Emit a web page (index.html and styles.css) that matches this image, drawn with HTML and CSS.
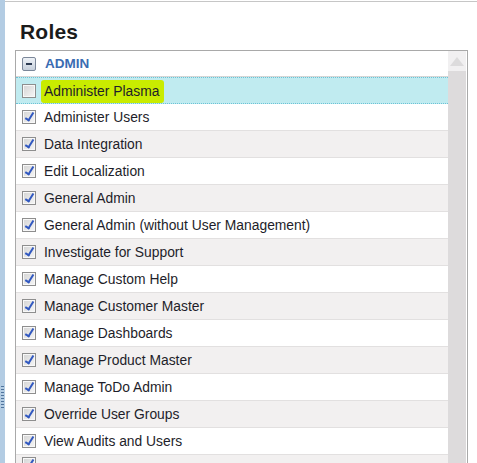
FILE: index.html
```html
<!DOCTYPE html>
<html>
<head>
<meta charset="utf-8">
<link rel="stylesheet" href="styles.css">
</head>
<body>
<div class="page">
  <div class="strip"><div class="grip"></div></div>
  <div class="main">
    <h1 class="title">Roles</h1>
    <div class="box">
      <div class="list">
        <div class="group">
          <span class="minus"><span class="bar"></span></span>
          <span class="group-name">ADMIN</span>
        </div>
        <div class="row selected"><span class="cb"></span><span class="label"><span class="hl">Administer Plasma</span></span></div>
        <div class="row"><span class="cb on"></span><span class="label">Administer Users</span></div>
        <div class="row alt"><span class="cb on"></span><span class="label">Data Integration</span></div>
        <div class="row"><span class="cb on"></span><span class="label">Edit Localization</span></div>
        <div class="row alt"><span class="cb on"></span><span class="label">General Admin</span></div>
        <div class="row"><span class="cb on"></span><span class="label">General Admin (without User Management)</span></div>
        <div class="row alt"><span class="cb on"></span><span class="label">Investigate for Support</span></div>
        <div class="row"><span class="cb on"></span><span class="label">Manage Custom Help</span></div>
        <div class="row alt"><span class="cb on"></span><span class="label">Manage Customer Master</span></div>
        <div class="row"><span class="cb on"></span><span class="label">Manage Dashboards</span></div>
        <div class="row alt"><span class="cb on"></span><span class="label">Manage Product Master</span></div>
        <div class="row"><span class="cb on"></span><span class="label">Manage ToDo Admin</span></div>
        <div class="row alt"><span class="cb on"></span><span class="label">Override User Groups</span></div>
        <div class="row"><span class="cb on"></span><span class="label">View Audits and Users</span></div>
        <div class="row alt last"><span class="cb on"></span></div>
      </div>
      <div class="scroll">
        <div class="up"><span class="tri"></span></div>
        <div class="track"></div>
      </div>
    </div>
  </div>
</div>
</body>
</html>
```
FILE: styles.css
```css
html, body {
  margin: 0;
  padding: 0;
  background: #fff;
  overflow: hidden;
}
.page {
  display: flex;
  height: 463px;
  font-family: "Liberation Sans", Arial, sans-serif;
}
.strip {
  width: 5px;
  flex: none;
  background: #b3cce3;
  position: relative;
}
.grip {
  position: absolute;
  left: 1px;
  top: 386px;
  width: 3px;
  height: 22px;
  background: repeating-linear-gradient(to bottom, #4f739c 0 1px, transparent 1px 3px);
}
.main {
  flex: 1;
  margin-top: 1px;
  border-top: 1px solid #c6c6c6;
  padding-left: 10px;
  overflow: hidden;
}
.title {
  margin: 0;
  padding: 17px 0 0 5px;
  height: 31px;
  font-size: 21px;
  font-weight: bold;
  color: #1b1b1b;
  letter-spacing: 0.2px;
  line-height: 26px;
}
.box {
  width: 451px;
  height: 420px;
  border: 1px solid #a9a9a9;
  display: flex;
}
.list {
  width: 432px;
  flex: none;
}
.group {
  height: 25px;
  border-bottom: 1px solid #d6d6d6;
  display: flex;
  align-items: center;
  padding-left: 6px;
}
.minus {
  width: 12px;
  height: 12px;
  border: 1px solid #7b8799;
  border-radius: 2px;
  background: linear-gradient(#eef2f7, #c6cfdb);
  display: flex;
  align-items: center;
  justify-content: center;
  margin-right: 9px;
}
.bar {
  width: 6px;
  height: 2px;
  background: #2c3a52;
}
.group-name {
  font-size: 13.5px;
  font-weight: bold;
  color: #3a6cb2;
}
.row {
  height: 26px;
  border-bottom: 1px solid #e2e0e0;
  display: flex;
  align-items: center;
  padding-left: 6px;
  background: #fff;
}
.row.alt {
  background: #f2f0f0;
}
.row.selected {
  background: #c0ebf0;
  border-top: 1px dotted #6cc3d6;
  border-bottom: 1px dotted #6cc3d6;
  height: 25px;
}
.row.last {
  align-items: flex-start;
  padding-top: 2px;
  height: 24px;
}
.cb {
  width: 12px;
  height: 12px;
  border: 1px solid #8e8e8e;
  background: linear-gradient(135deg, #d4d4d4, #f6f6f6);
  box-shadow: inset 0 0 0 1px #f8f8f8;
  margin-right: 8px;
  flex: none;
  position: relative;
}
.cb.on::after {
  content: "";
  position: absolute;
  left: 4px;
  top: 0px;
  width: 3px;
  height: 8px;
  border-right: 2px solid #3158c0;
  border-bottom: 2px solid #3158c0;
  transform: rotate(32deg);
}
.label {
  font-size: 13.85px;
  color: #1e1e2a;
  white-space: nowrap;
}
.hl {
  background: #c9ec00;
  border-radius: 3px;
  padding: 3px 5px 4px 3px;
  margin-left: -3px;
}
.scroll {
  width: 18px;
  flex: none;
  display: flex;
  flex-direction: column;
  margin-right: 1px;
}
.up {
  height: 20px;
  background: #f1f0f1;
  display: flex;
  align-items: center;
  justify-content: center;
}
.tri {
  width: 0;
  height: 0;
  border-left: 7px solid transparent;
  border-right: 7px solid transparent;
  border-bottom: 9px solid #dcdbdc;
}
.track {
  flex: 1;
  background: #dddbdc;
}
```
